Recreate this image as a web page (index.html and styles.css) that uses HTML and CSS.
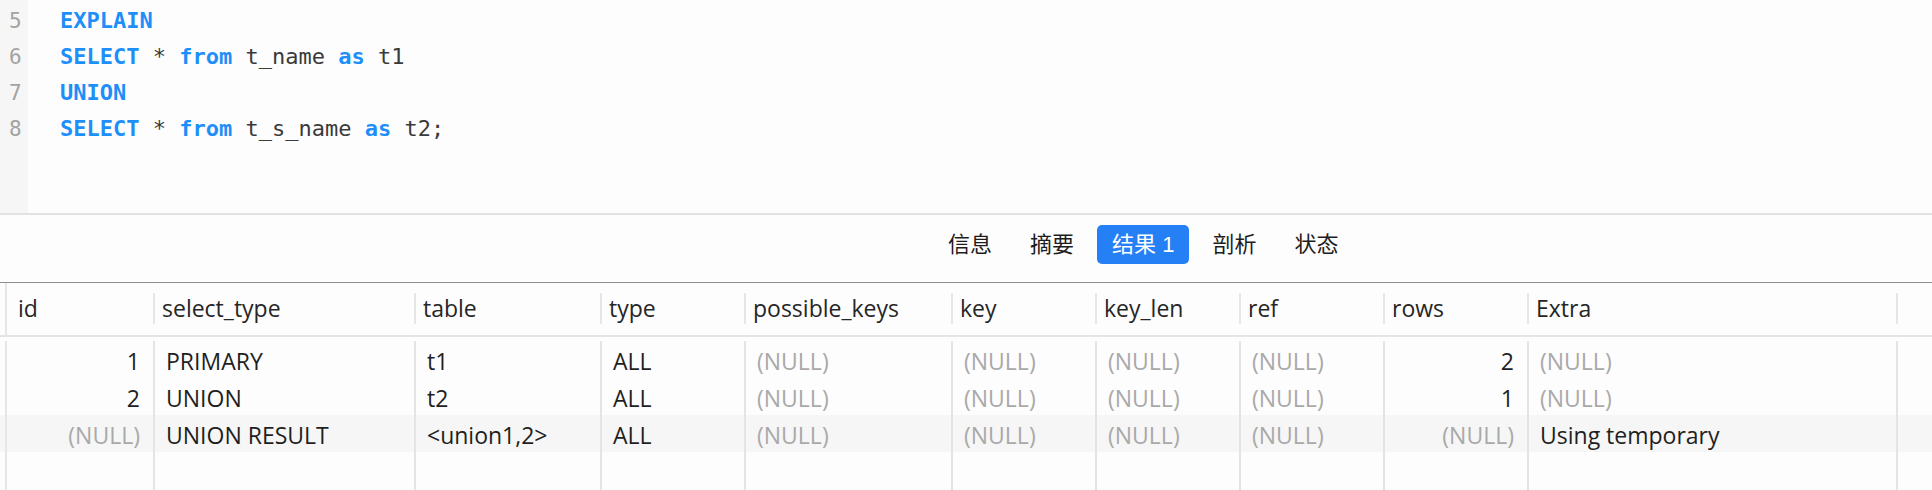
FILE: index.html
```html
<!DOCTYPE html>
<html lang="zh-CN">
<head>
<meta charset="utf-8">
<title>EXPLAIN</title>
<link rel="stylesheet" href="styles.css">
</head>
<body>
<div class="editor">
  <div class="gutter">
    <div class="ln">5</div>
    <div class="ln">6</div>
    <div class="ln">7</div>
    <div class="ln">8</div>
  </div>
  <div class="code">
    <div class="line"><span class="kw">EXPLAIN</span></div>
    <div class="line"><span class="kw">SELECT</span> * <span class="kw">from</span> t_name <span class="kw">as</span> t1</div>
    <div class="line"><span class="kw">UNION</span></div>
    <div class="line"><span class="kw">SELECT</span> * <span class="kw">from</span> t_s_name <span class="kw">as</span> t2;</div>
  </div>
</div>
<div class="tabbar">
  <span class="tab">信息</span>
  <span class="tab">摘要</span>
  <span class="tab active">结果 1</span>
  <span class="tab">剖析</span>
  <span class="tab">状态</span>
</div>
<div class="grid">
  <div class="head">
    <div class="cols">
      <div class="th first">id</div>
      <div class="th">select_type</div>
      <div class="th">table</div>
      <div class="th">type</div>
      <div class="th">possible_keys</div>
      <div class="th">key</div>
      <div class="th">key_len</div>
      <div class="th">ref</div>
      <div class="th">rows</div>
      <div class="th">Extra</div>
    </div>
  </div>
  <div class="body">
    <div class="row">
      <div class="cols">
        <div class="td num">1</div>
        <div class="td">PRIMARY</div>
        <div class="td">t1</div>
        <div class="td">ALL</div>
        <div class="td null">(NULL)</div>
        <div class="td null">(NULL)</div>
        <div class="td null">(NULL)</div>
        <div class="td null">(NULL)</div>
        <div class="td num">2</div>
        <div class="td null">(NULL)</div>
      </div>
    </div>
    <div class="row">
      <div class="cols">
        <div class="td num">2</div>
        <div class="td">UNION</div>
        <div class="td">t2</div>
        <div class="td">ALL</div>
        <div class="td null">(NULL)</div>
        <div class="td null">(NULL)</div>
        <div class="td null">(NULL)</div>
        <div class="td null">(NULL)</div>
        <div class="td num">1</div>
        <div class="td null">(NULL)</div>
      </div>
    </div>
    <div class="row alt">
      <div class="cols">
        <div class="td num null">(NULL)</div>
        <div class="td">UNION RESULT</div>
        <div class="td">&lt;union1,2&gt;</div>
        <div class="td">ALL</div>
        <div class="td null">(NULL)</div>
        <div class="td null">(NULL)</div>
        <div class="td null">(NULL)</div>
        <div class="td null">(NULL)</div>
        <div class="td num null">(NULL)</div>
        <div class="td">Using temporary</div>
      </div>
    </div>
    <div class="row fill">
      <div class="cols">
        <div class="td"></div><div class="td"></div><div class="td"></div><div class="td"></div><div class="td"></div>
        <div class="td"></div><div class="td"></div><div class="td"></div><div class="td"></div><div class="td"></div>
      </div>
    </div>
  </div>
</div>
</body>
</html>
```
FILE: styles.css
```css
html, body {
  margin: 0;
  padding: 0;
}
body {
  width: 1932px;
  height: 490px;
  overflow: hidden;
  display: flex;
  flex-direction: column;
  background: #fdfdfd;
  font-family: "Liberation Sans", "Noto Sans CJK SC", sans-serif;
  color: #1f1f1f;
}

/* editor */
.editor {
  display: flex;
  flex: none;
  height: 215px;
  box-sizing: border-box;
  border-bottom: 2px solid #e2e2e2;
}
.gutter {
  width: 28px;
  flex: none;
  background: #f6f6f6;
  padding-top: 3px;
  box-sizing: border-box;
  font-family: "DejaVu Sans Mono", monospace;
  font-size: 21px;
  color: #a3a3a3;
}
.ln {
  height: 36px;
  line-height: 36px;
  padding-left: 9px;
}
.code {
  padding: 3px 0 0 32px;
  font-family: "DejaVu Sans Mono", monospace;
  font-size: 22px;
  color: #3a3a3a;
}
.line {
  height: 36px;
  line-height: 36px;
  white-space: pre;
}
.kw {
  color: #1e8ff8;
  font-weight: bold;
}

/* tabs */
.tabbar {
  display: flex;
  flex: none;
  gap: 8px;
  padding: 10px 0 18px 933px;
  border-bottom: 1px solid #8f8f8f;
}
.tab {
  height: 39px;
  line-height: 39px;
  padding: 0 15px;
  font-size: 22px;
  color: #1d1d1d;
  border-radius: 5px;
  font-family: "Liberation Sans", "Noto Sans CJK SC", sans-serif;
}
.tab.active {
  background: #2680f5;
  color: #ffffff;
}

/* grid */
.grid {
  flex: 1;
  min-height: 0;
  display: flex;
  flex-direction: column;
  font-family: "Open Sans", "Liberation Sans", sans-serif;
  font-size: 23px;
}
.cols {
  display: grid;
  grid-template-columns: 148px 261px 186px 144px 207px 144px 144px 144px 144px 369px;
  margin-left: 5px;
  border-left: 2px solid #e6e6e6;
}
.head {
  flex: none;
  border-bottom: 2px solid #e4e4e4;
}
.head .cols {
  padding: 10px 0 11px;
}
.th {
  height: 31px;
  box-sizing: border-box;
  padding: 1px 0 0 7px;
  line-height: 29px;
  border-right: 2px solid #e6e6e6;
  color: #262626;
  white-space: nowrap;
}
.th.first {
  padding-left: 11px;
}
.body {
  flex: 1;
  display: flex;
  flex-direction: column;
  padding-top: 4px;
}
.row {
  flex: none;
}
.td {
  height: 37px;
  box-sizing: border-box;
  padding: 4px 13px 0 11px;
  line-height: 32px;
  border-right: 2px solid #e4e4e4;
  white-space: nowrap;
}
.row.fill {
  flex: 1;
  display: flex;
  flex-direction: column;
}
.row.fill .cols {
  flex: 1;
}
.row.fill .td {
  height: auto;
}
.num {
  text-align: right;
}
.null {
  color: #a9a9a9;
}
.row.alt {
  background: #f6f6f6;
}
```
